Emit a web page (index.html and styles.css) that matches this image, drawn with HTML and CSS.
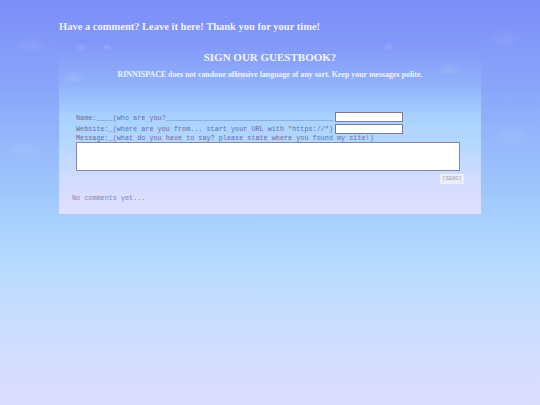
FILE: index.html
```html
<!DOCTYPE html>
<html>
<head>
<meta charset="utf-8">
<link rel="stylesheet" href="styles.css">
</head>
<body>
<div class="page">
  <h1 class="title">Have a comment? Leave it here! Thank you for your time!</h1>
  <div class="panel">
    <h2 class="panel-head">SIGN OUR GUESTBOOK?</h2>
    <p class="notice">RINNISPACE does not condone offensive language of any sort. Keep your messages polite.</p>
    <form class="gb-form">
      <div class="row row-name">
        <label class="lbl">Name:____(who are you?_________________________________________</label>
        <input class="field" type="text">
      </div>
      <div class="row row-site">
        <label class="lbl">Website:_(where are you from... start your URL with "https://")</label>
        <input class="field" type="text">
      </div>
      <div class="row row-msg">
        <label class="lbl">Message:_(what do you have to say? please state where you found my site!)</label>
      </div>
      <textarea class="msg"></textarea>
      <div class="send-row"><button class="send" type="button">[SEND]</button></div>
    </form>
    <div class="comments">No comments yet...</div>
  </div>
</div>
</body>
</html>
```
FILE: styles.css
```css
html, body {
  margin: 0;
  padding: 0;
}
body {
  width: 540px;
  height: 405px;
  overflow: hidden;
  background:
    radial-gradient(ellipse 16px 9px at 30px 45px, rgba(255,255,255,0.07), transparent),
    radial-gradient(ellipse 18px 10px at 505px 40px, rgba(255,255,255,0.07), transparent),
    radial-gradient(ellipse 20px 12px at 25px 150px, rgba(255,255,255,0.08), transparent),
    radial-gradient(ellipse 20px 12px at 512px 135px, rgba(255,255,255,0.09), transparent),
    linear-gradient(to bottom, #7b8df8 0%, #8aa6fa 22%, #a4cdfd 52%, #b7dbfe 65%, #cadefe 80%, #dcdcff 100%);
  font-family: "Liberation Serif", "Times New Roman", serif;
}
.page {
  padding: 20px 0 0 59px;
}
.title {
  margin: 0;
  font-size: 10.5px;
  line-height: 14px;
  font-weight: bold;
  color: #f0f2ff;
  height: 20px;
}
.panel {
  width: 422px;
  height: 174px;
  box-sizing: border-box;
  padding-top: 11px;
  background:
    radial-gradient(ellipse 6px 4px at 22px 7px, rgba(255,255,255,0.14), transparent),
    radial-gradient(ellipse 6px 4px at 48px 7px, rgba(255,255,255,0.14), transparent),
    radial-gradient(ellipse 6px 4px at 330px 7px, rgba(255,255,255,0.12), transparent),
    radial-gradient(ellipse 12px 6px at 15px 38px, rgba(255,255,255,0.12), transparent),
    radial-gradient(ellipse 12px 6px at 390px 30px, rgba(255,255,255,0.12), transparent),
    radial-gradient(ellipse 12px 6px at 180px 36px, rgba(255,255,255,0.10), transparent),
    linear-gradient(to bottom, #8195f8 0%, #90b0fb 25%, #a8d3fe 45%, #b6d8fe 60%, #d2dcff 80%, #e2dfff 100%);
}
.panel-head {
  margin: 0;
  text-align: center;
  font-size: 11px;
  line-height: 12px;
  font-weight: bold;
  color: #f2f4ff;
}
.notice {
  margin: 7px 0 0;
  text-align: center;
  font-size: 7.9px;
  line-height: 10px;
  font-weight: bold;
  color: #f0f2ff;
}
.gb-form {
  margin: 32px 0 0;
  padding: 0 17px;
}
.row {
  display: flex;
  align-items: center;
}
.row-name, .row-site {
  height: 11px;
}
.row-msg {
  height: 8px;
}
.lbl {
  font-family: "Liberation Mono", "Courier New", monospace;
  font-size: 6.8px;
  line-height: 8px;
  color: #6c6ca8;
  white-space: pre;
}
.field {
  margin: 0 0 0 2px;
  padding: 0;
  width: 68px;
  height: 10px;
  box-sizing: border-box;
  border: 1px solid #7a7a9e;
  background: #ffffff;
  outline: none;
}
.row-name .field {
  align-self: flex-start;
}
.msg {
  display: block;
  margin: 0;
  padding: 0;
  width: 384px;
  height: 29px;
  box-sizing: border-box;
  border: 1px solid #8a86a8;
  background: #ffffff;
  resize: none;
  outline: none;
}
.send-row {
  display: flex;
  justify-content: flex-end;
  margin-top: 3px;
}
.send {
  margin: 0;
  padding: 0;
  width: 24px;
  height: 10px;
  border: none;
  background: #ededf6;
  font-family: "Liberation Mono", "Courier New", monospace;
  font-size: 5.4px;
  line-height: 10px;
  color: #a0a0b4;
}
.comments {
  margin-top: 10px;
  padding-left: 13px;
  font-family: "Liberation Mono", "Courier New", monospace;
  font-size: 6.8px;
  line-height: 8px;
  color: #8484b8;
}
```
